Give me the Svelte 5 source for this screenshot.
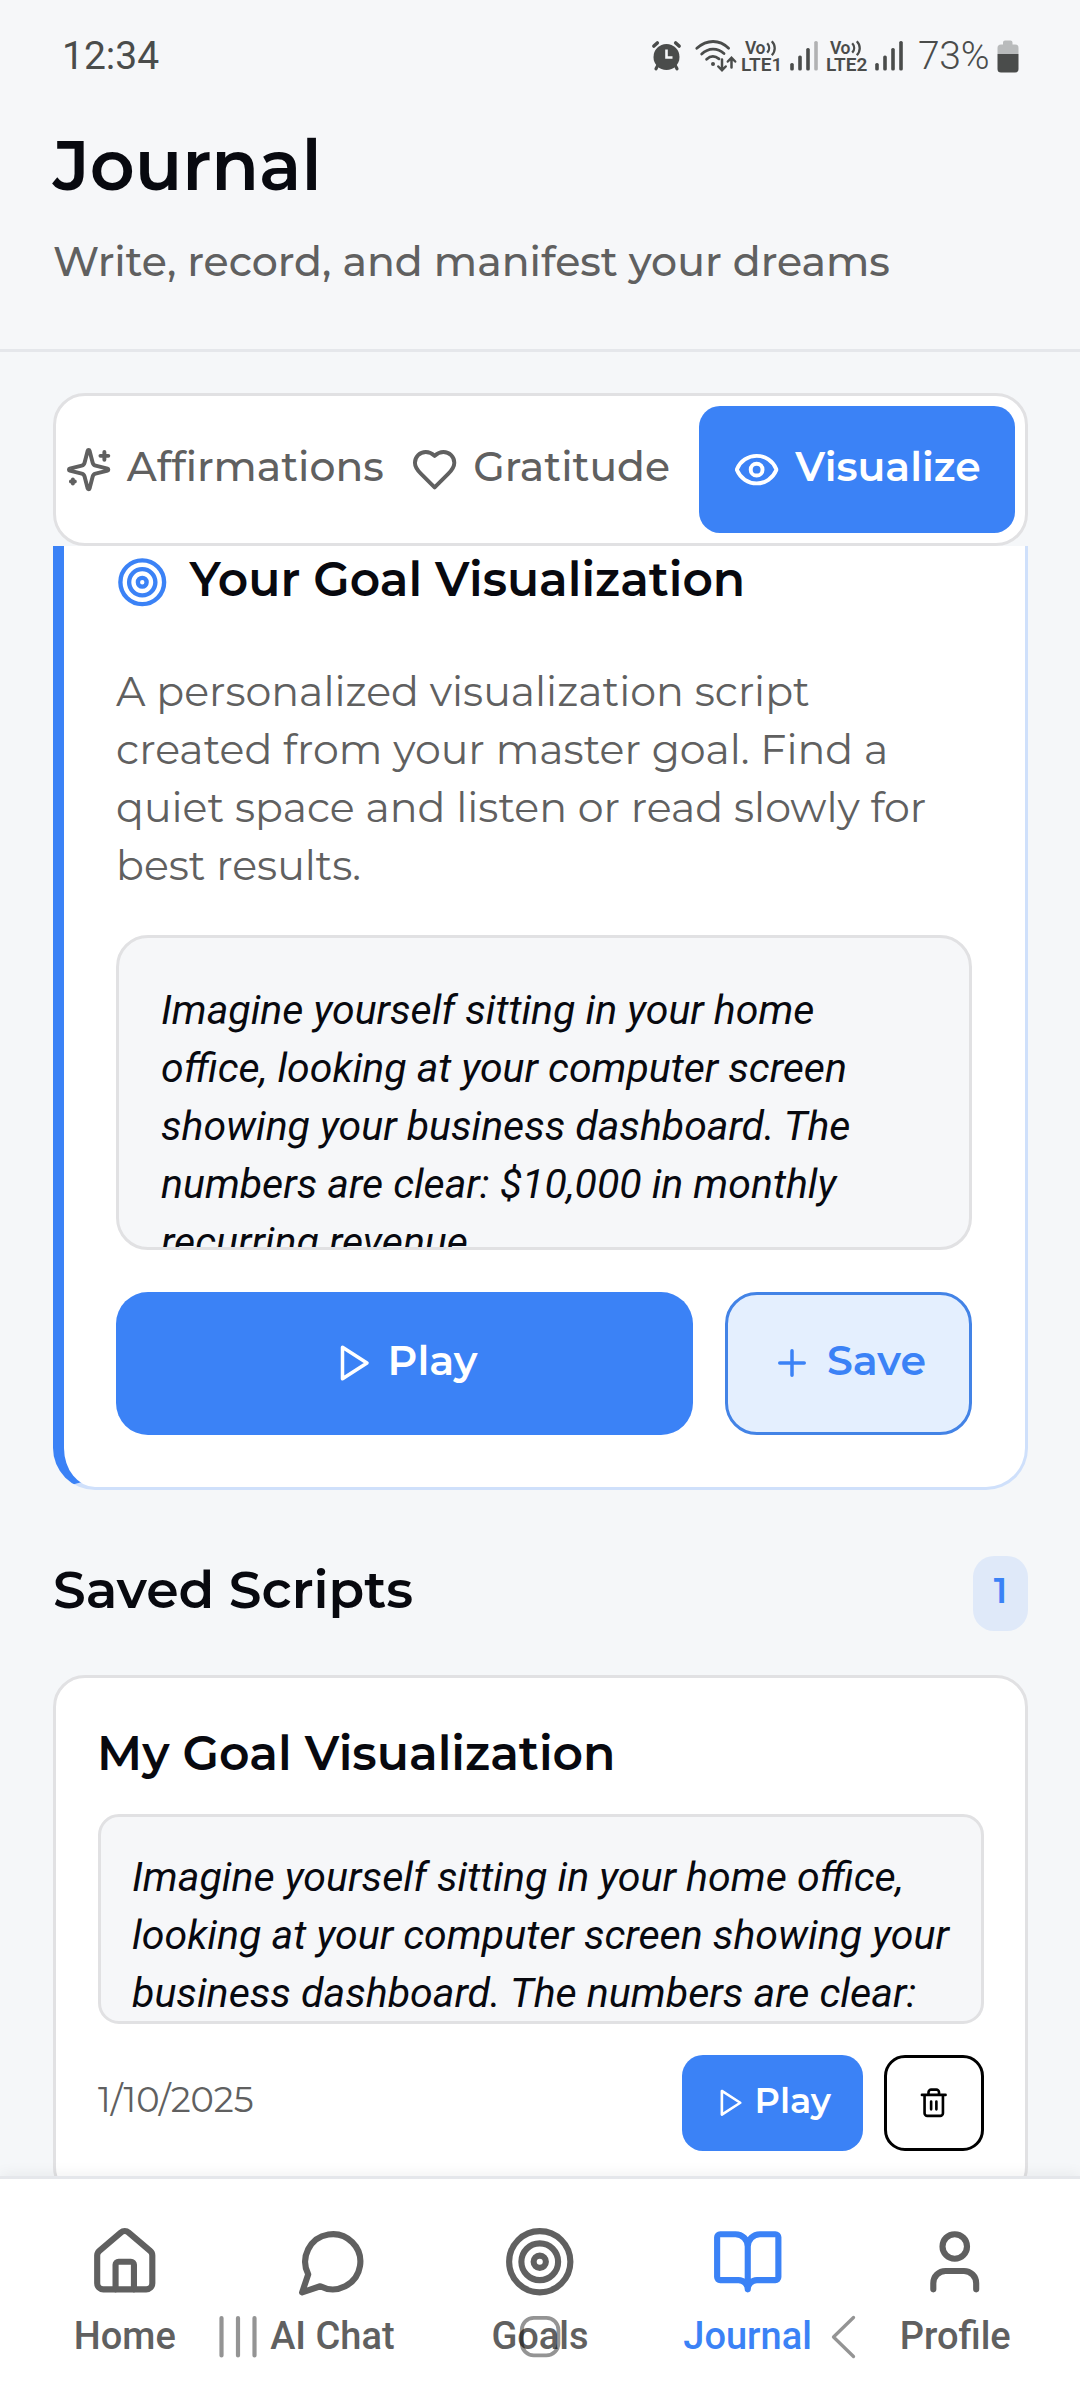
<script>
  const tabs = [
    { label: 'Affirmations', icon: 'sparkles' },
    { label: 'Gratitude', icon: 'heart' },
    { label: 'Visualize', icon: 'eye', active: true }
  ];
  const nav = [
    { label: 'Home', icon: 'house' },
    { label: 'AI Chat', icon: 'chat' },
    { label: 'Goals', icon: 'target' },
    { label: 'Journal', icon: 'book', active: true },
    { label: 'Profile', icon: 'user' }
  ];
  const sims = [{ name: 'LTE1', strength: 3 }, { name: 'LTE2', strength: 4 }];
  const bars = [{ x: 0.2, y: 22 }, { x: 8.2, y: 14.5 }, { x: 16.2, y: 7 }, { x: 24.2, y: 0 }];
</script>

{#snippet icon(name)}
  <svg class="icon" viewBox="0 0 24 24" fill="none" stroke="currentColor" stroke-width="2" stroke-linecap="round" stroke-linejoin="round">
    {#if name === 'sparkles'}
      <path d="M9.937 15.5A2 2 0 0 0 8.5 14.063l-6.135-1.582a.5.5 0 0 1 0-.962L8.5 9.936A2 2 0 0 0 9.937 8.5l1.582-6.135a.5.5 0 0 1 .963 0L14.063 8.5A2 2 0 0 0 15.5 9.937l6.135 1.581a.5.5 0 0 1 0 .964L15.5 14.063a2 2 0 0 0-1.437 1.437l-1.582 6.135a.5.5 0 0 1-.963 0z" />
      <path d="M20 3v4M22 5h-4M4 17v2M5 18H3" />
    {:else if name === 'heart'}
      <path d="M19 14c1.49-1.46 3-3.21 3-5.5A5.5 5.5 0 0 0 16.5 3c-1.76 0-3 .5-4.5 2-1.5-1.5-2.74-2-4.5-2A5.5 5.5 0 0 0 2 8.5c0 2.3 1.5 4.05 3 5.5l7 7Z" />
    {:else if name === 'eye'}
      <path d="M2.062 12.348a1 1 0 0 1 0-.696 10.75 10.75 0 0 1 19.876 0 1 1 0 0 1 0 .696 10.75 10.75 0 0 1-19.876 0" />
      <circle cx="12" cy="12" r="3" />
    {:else if name === 'target'}
      <circle cx="12" cy="12" r="10" /><circle cx="12" cy="12" r="6" /><circle cx="12" cy="12" r="2" />
    {:else if name === 'play'}
      <path d="M6 3l14 9-14 9z" />
    {:else if name === 'plus'}
      <path d="M5 12h14M12 5v14" />
    {:else if name === 'trash'}
      <path d="M3 6h18M19 6v14c0 1-1 2-2 2H7c-1 0-2-1-2-2V6M8 6V4c0-1 1-2 2-2h4c1 0 2 1 2 2v2M10 11v6M14 11v6" />
    {:else if name === 'house'}
      <path d="M15 21v-8a1 1 0 0 0-1-1h-4a1 1 0 0 0-1 1v8" />
      <path d="M3 10a2 2 0 0 1 .709-1.528l7-5.999a2 2 0 0 1 2.582 0l7 5.999A2 2 0 0 1 21 10v9a2 2 0 0 1-2 2H5a2 2 0 0 1-2-2z" />
    {:else if name === 'chat'}
      <path d="M7.9 20A9 9 0 1 0 4 16.1L2 22Z" />
    {:else if name === 'book'}
      <path d="M12 7v14M3 18a1 1 0 0 1-1-1V4a1 1 0 0 1 1-1h5a4 4 0 0 1 4 4 4 4 0 0 1 4-4h5a1 1 0 0 1 1 1v13a1 1 0 0 1-1 1h-6a3 3 0 0 0-3 3 3 3 0 0 0-3-3z" />
    {:else if name === 'user'}
      <path d="M19 21v-2a4 4 0 0 0-4-4H9a4 4 0 0 0-4 4v2" /><circle cx="12" cy="7" r="4" />
    {/if}
  </svg>
{/snippet}

<div class="app">
  <div class="status">
    <span class="time">12:34</span>
    <svg class="alarm" viewBox="0 0 29 30">
      <g stroke="currentColor" stroke-linecap="round" stroke-width="3.6">
        <path d="M1.9 5L5.3 2M27.1 5L23.7 2" />
        <path d="M6 24l-2 3.8M23 24l2 3.8" stroke-width="3.2" />
      </g>
      <circle cx="14.5" cy="16" r="13" fill="currentColor" />
      <path d="M14.5 8.5v8h6" fill="none" stroke="#f6f7f9" stroke-width="2.6" />
    </svg>
    <svg class="wifi" viewBox="0 0 42 32" fill="none" stroke="currentColor" stroke-width="2.8" stroke-linecap="round">
      <path d="M1.8 8.3C12-.8 24.500-.8 33.600 8.300M6.700 14C13.500 7.500 22.500 7.500 29 13.500M11.600 19.200C15.500 15.600 20 15.600 24 18.800" />
      <circle cx="18" cy="24" r="2" fill="currentColor" stroke="none" />
      <path d="M27 19.500v10M23.300 26.500l3.700 3.800 3.700-3.800M36.500 27.500V18.500M32.800 21.500l3.700-3.800 3.700 3.800" stroke-width="2.500" />
    </svg>
    {#each sims as sim}
      <svg class="volte" viewBox="0 0 42 33">
        <text x="3" y="13.600" class="vo">Vo</text>
        <path d="M25.200 3.200c2.600 2.800 2.600 6.600 0 9.400M29.800 1.200c3.900 4 3.900 10 0 14" fill="none" stroke="currentColor" stroke-width="2.300" />
        <text x="-1" y="31.200" class="lte">{sim.name}</text>
      </svg>
      <svg class="signal" viewBox="0 0 28 30">
        {#each bars as b, i}
          <rect x={b.x} y={b.y} width="3.600" height={29.500 - b.y} rx="1.600" fill="currentColor" opacity={i < sim.strength ? 1 : 0.4} />
        {/each}
      </svg>
    {/each}
    <span class="percent">73%</span>
    <svg class="battery" viewBox="0 0 22 33">
      <path d="M6 4.500V2.500Q6 .5 8 .5h5.500q2 0 2 2v2H18q3.500 0 3.500 3.500v6H.5V8q0-3.500 3.500-3.500z" fill="#b9bbbc" />
      <path d="M.5 14h21v15q0 3.500-3.500 3.500H4Q.5 32.500.5 29z" fill="currentColor" />
    </svg>
  </div>

  <header>
    <h1>Journal</h1>
    <p>Write, record, and manifest your dreams</p>
  </header>

  <div class="tabs">
    {#each tabs as tab}
      <button class="tab" class:active={tab.active}>{@render icon(tab.icon)}<span>{tab.label}</span></button>
    {/each}
  </div>

  <main>
    <section class="goal">
      <div class="goal-head">{@render icon('target')}<h2>Your Goal Visualization</h2></div>
      <p class="desc">A personalized visualization script<br />created from your master goal. Find a<br />quiet space and listen or read slowly for<br />best results.</p>
      <div class="script large">Imagine yourself sitting in your home<br />office, looking at your computer screen<br />showing your business dashboard. The<br />numbers are clear: $10,000 in monthly<br />recurring revenue.</div>
      <div class="actions">
        <button class="play">{@render icon('play')}<span>Play</span></button>
        <button class="save">{@render icon('plus')}<span>Save</span></button>
      </div>
    </section>

    <div class="section-head"><h2>Saved Scripts</h2><span class="badge">1</span></div>

    <section class="saved">
      <h3>My Goal Visualization</h3>
      <div class="script small">Imagine yourself sitting in your home office,<br />looking at your computer screen showing your<br />business dashboard. The numbers are clear:</div>
      <footer>
        <time>1/10/2025</time>
        <button class="play mini">{@render icon('play')}<span>Play</span></button>
        <button class="delete" aria-label="Delete">{@render icon('trash')}</button>
      </footer>
    </section>
  </main>

  <nav>
    {#each nav as item}
      <a href="#{item.icon}" class:active={item.active}>{@render icon(item.icon)}<span>{item.label}</span></a>
    {/each}
    <!-- translucent system navigation keys over the tab bar -->
    <svg class="system" viewBox="0 0 1080 60" fill="none" stroke="#000" stroke-opacity=".42" stroke-linecap="round" stroke-linejoin="round">
      <path d="M221.500 11v37.400M238 11v37.400M254.500 11v37.400" stroke-width="4.200" />
      <rect x="521.800" y="10.800" width="36.600" height="37.600" rx="12" stroke-width="3.800" />
      <path d="M853.500 10.500L833.500 30l20 19.500" stroke-width="3.300" />
    </svg>
  </nav>
</div>

<style>
  :global(body) { margin: 0; background: #f6f7f9; }
  .app { width: 1080px; height: 2400px; display: flex; flex-direction: column; overflow: hidden; background: #f5f7f9; font-family: Montserrat, "Liberation Sans", sans-serif; color: #08090f; }
  h1, h2, h3, p { margin: 0; font-weight: 600; white-space: nowrap; }
  button { font: inherit; color: inherit; margin: 0; padding: 0; border: 0; background: none; display: flex; align-items: center; justify-content: center; box-sizing: border-box; white-space: nowrap; }
  .icon { display: block; flex: none; width: 47.250px; height: 47.250px; }

  .status { height: 112px; flex: none; display: flex; align-items: center; padding: 0 61px 0 62px; box-sizing: border-box; color: #4a4c4b; background: #f6f7f9; font-family: Roboto, sans-serif; }
  .status svg { display: block; flex: none; overflow: visible; }
  .time { font-size: 39px; margin-right: auto; }
  .alarm { width: 29px; height: 30px; margin-right: 14px; }
  .wifi { width: 42px; height: 32px; margin-right: 5px; }
  .volte { width: 42px; height: 33px; margin-right: 6px; }
  .vo { font: 600 17.500px Roboto, sans-serif; fill: currentColor; letter-spacing: -.5px; }
  .lte { font: 600 19px Roboto, sans-serif; fill: currentColor; }
  .signal { width: 28px; height: 30px; margin-right: 9px; }
  .percent { font-size: 39px; font-weight: 350; margin: 0 6px 0 6px; letter-spacing: -.3px; width: 73px; white-space: nowrap; }
  .battery { width: 22px; height: 33px; }

  header { flex: none; height: 240px; box-sizing: border-box; padding: 11px 53px 0; border-bottom: 3px solid #e5e7eb; background: #f6f7f9; }
  h1 { font-size: 69.800px; line-height: 85px; }
  header p { margin-top: 24px; font-size: 41px; line-height: 58px; font-weight: 500; color: #606060; }

  .tabs { flex: none; height: 153px; margin: 41px 52px 0 53px; box-sizing: border-box; display: grid; grid-template-columns: repeat(3, minmax(0, 1fr)); padding: 10px; border: 3px solid #e1e1e3; border-radius: 32px; background: #fff; }
  .tab { gap: 15px; border-radius: 21px; font-size: 40.900px; font-weight: 500; color: #606060; }
  .tab span { margin-top: -7px; }
  .tab.active { background: #3b82f6; color: #fff; font-weight: 600; }

  main { flex: 1; min-height: 0; overflow: hidden; padding: 0 52px 0 53px; }
  .goal { height: 989px; margin-top: -45px; box-sizing: border-box; padding: 50px 53px 0 52px; border: 3px solid #cfe0fb; border-left: 11px solid #3b82f6; border-radius: 42px; background: #fff; }
  .goal-head { display: flex; align-items: center; gap: 21px; height: 56px; }
  .goal-head .icon { width: 52.500px; height: 52.500px; color: #3b82f6; }
  .goal-head h2 { font-size: 47.200px; margin-top: -7px; }
  .desc { margin-top: 53px; font-size: 41.150px; line-height: 57.900px; font-weight: 400; color: #606060; }
  .script { box-sizing: border-box; overflow: hidden; border: 3px solid #e1e1e3; background: #f6f7f9; font: italic 400 41.100px/57.900px Roboto, sans-serif; white-space: nowrap; }
  .large { height: 315px; margin-top: 40px; padding: 43px 42px 0; border-radius: 32px; font-size: 41px; line-height: 58px; }
  .small { height: 210px; margin-top: 32px; padding: 32px 31px 0; border-radius: 21px; }
  .actions { display: flex; gap: 32px; margin-top: 42px; }
  .actions button { height: 143px; border-radius: 32px; font-size: 41.100px; font-weight: 600; gap: 14px; }
  .actions span { margin-top: -6px; }
  .actions .icon { width: 42px; height: 42px; }
  .play { background: #3b82f6; color: #fff; }
  .actions .play { flex: 1; }
  .actions .save { width: 247px; border: 3px solid #4383e6; background: #e4effe; color: #3b82f6; }

  .section-head { display: flex; align-items: center; justify-content: space-between; height: 75px; margin: 66px 0 44px; }
  .section-head h2 { font-size: 52.100px; margin-top: -8px; }
  .badge { width: 55px; height: 75px; border-radius: 21px; background: #dfe9f9; color: #3b82f6; font-size: 35.500px; font-weight: 600; line-height: 69px; text-align: center; }

  .saved { height: 524px; box-sizing: border-box; padding: 46px 41px 0 42px; border: 3px solid #e1e1e3; border-radius: 32px; background: #fff; }
  h3 { font-size: 47.300px; line-height: 58px; margin-left: -1px; }
  footer { display: flex; align-items: center; height: 96px; margin-top: 31px; }
  time { margin-right: auto; margin-top: -7px; font-size: 35.200px; color: #606060; }
  .mini { width: 181px; height: 96px; border-radius: 21px; font-size: 35px; font-weight: 600; gap: 9px; }
  .mini span { margin-top: -5px; }
  .mini .icon, .delete .icon { width: 31.500px; height: 31.500px; }
  .delete { width: 100px; height: 96px; margin-left: 21px; border: 3px solid #000; border-radius: 21px; color: #000; }

  nav { position: relative; flex: none; height: 224px; box-sizing: border-box; display: grid; grid-template-columns: repeat(5, 1fr); padding: 46px 21px 0; border-top: 3px solid #e5e7eb; background: #fff; box-shadow: 0 -2px 14px rgba(0, 0, 0, .06); font-family: Roboto, sans-serif; }
  nav a { display: flex; flex-direction: column; align-items: center; color: #606060; text-decoration: none; font-size: 38px; font-weight: 500; line-height: 44px; }
  nav a.active { color: #3b82f6; }
  nav .icon { width: 73.500px; height: 73.500px; margin-bottom: 15px; }
  .system { position: absolute; left: 0; top: 128px; width: 1080px; height: 60px; }
</style>
